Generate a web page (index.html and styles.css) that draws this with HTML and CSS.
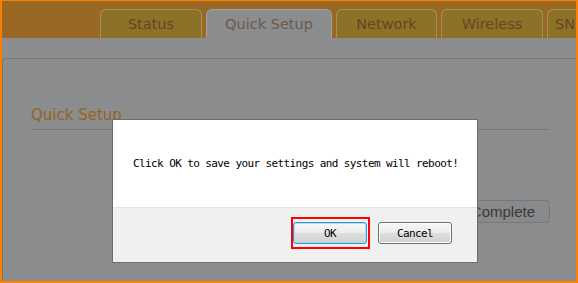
FILE: index.html
```html
<!DOCTYPE html>
<html lang="en">
<head>
    <meta charset="UTF-8">
    <meta name="viewport" content="width=device-width, initial-scale=1.0">
    <title>Quick Setup</title>
    <link rel="stylesheet" href="styles.css">
</head>
<body>
    <div class="frame">
        <div class="page">
            <header class="top">
                <nav class="tabs">
                    <a class="tab tab-status">Status</a>
                    <a class="tab tab-quick active">Quick Setup</a>
                    <a class="tab tab-network">Network</a>
                    <a class="tab tab-wireless">Wireless</a>
                    <a class="tab tab-snmp">SN</a>
                </nav>
            </header>
            <main class="content">
                <section class="panel">
                    <h2 class="panel-title">Quick Setup</h2>
                    <div class="actions">
                        <button type="button" class="btn-complete">Complete</button>
                    </div>
                </section>
            </main>
        </div>

        <!-- confirm dialog -->
        <div class="dialog">
            <div class="dialog-body">
                <p class="dialog-msg">Click OK to save your settings and system will reboot!</p>
            </div>
            <div class="dialog-foot">
                <span class="focus-ring"><button type="button" class="btn btn-ok">OK</button></span>
                <button type="button" class="btn btn-cancel">Cancel</button>
            </div>
        </div>
    </div>
</body>
</html>
```

FILE: styles.css
```css
html, body { margin: 0; height: 100%; }
body { font-family: "DejaVu Sans", Verdana, sans-serif; overflow: hidden; }

.frame { position: relative; box-sizing: border-box; height: 283px; border: 2px solid #ff8000; border-top-width: 1px; background: #8e8f91; }
.page { position: relative; height: 100%; display: flex; flex-direction: column; }
.page::after { content: ""; position: absolute; inset: 0; pointer-events: none; background-image: repeating-conic-gradient(rgba(0,0,0,.035) 0 25%, transparent 0 50%); background-size: 2px 2px; }

.top { height: 37px; flex: none; background: #9c6a24; display: flex; align-items: flex-end; padding-left: 98px; overflow: hidden; }
.tabs { display: flex; gap: 4px; }
.tab { box-sizing: border-box; height: 29px; line-height: 28px; text-align: center; font-size: 14.5px; color: #654627; background: #8f7427; border: 1px solid #a8925e; border-bottom: none; border-radius: 6px 6px 0 0; white-space: nowrap; overflow: hidden; }
.tab.active { background: #8e8f91; color: #6d5a4b; border-color: #a3a4a6; }
.tab-status { width: 102px; }
.tab-quick { width: 126px; }
.tab-network { width: 101px; }
.tab-wireless { width: 102px; }
.tab-snmp { width: 29px; text-align: left; padding-left: 7px; border-right: none; border-radius: 6px 0 0 0; }

.content { flex: 1; display: flex; flex-direction: column; }
.panel { flex: 1; margin-top: 20px; border: 1px solid #77787a; border-right: none; border-bottom: none; border-radius: 4px 0 0 0; padding: 0 26px 0 28px; }
.panel-title { margin: 47px 0 0; font-size: 15px; line-height: 18px; font-weight: normal; color: #94661f; padding-bottom: 5px; border-bottom: 1px solid #7a7b7d; }
.actions { display: flex; justify-content: flex-end; margin-top: 70px; }
.btn-complete { box-sizing: border-box; height: 23px; padding: 0 14px 0 6px; border: 1px solid #78797b; border-radius: 4px; background: #8b8c8e; font-family: "Liberation Sans", Arial, sans-serif; font-size: 15px; color: #3a3a3a; }

.dialog { position: absolute; left: 110px; top: 118px; width: 366px; height: 144px; box-sizing: border-box; border: 1px solid #6c6c6c; background: #fff; display: flex; flex-direction: column; }
.dialog-body { height: 87px; box-sizing: border-box; padding: 37px 0 0 20px; background: #fff; }
.dialog-msg { margin: 0; font-family: "DejaVu Sans Mono", "Liberation Mono", monospace; font-size: 11px; line-height: 14px; letter-spacing: -0.6px; color: #000; white-space: nowrap; }
.dialog-foot { flex: 1; background: #f0f0f0; border-top: 1px solid #e2e2e2; display: flex; justify-content: flex-end; align-items: center; gap: 8px; padding: 0 25px 4px 0; }

.focus-ring { display: inline-flex; border: 2px solid #ff0000; padding: 3px 1px 3px 0; }
.btn { box-sizing: border-box; width: 74px; height: 22px; padding: 0; border-radius: 3px; font-family: "DejaVu Sans Mono", "Liberation Mono", monospace; font-size: 11px; letter-spacing: -0.6px; color: #000; background: linear-gradient(#f7f7f7, #ececec 50%, #dedede 52%, #d2d2d2); }
.btn-ok { border: 1px solid #2f9bd6; box-shadow: inset 0 0 0 1px #a9ddf6; }
.btn-cancel { border: 1px solid #707070; box-shadow: inset 0 0 0 1px #fbfbfb; }
```
